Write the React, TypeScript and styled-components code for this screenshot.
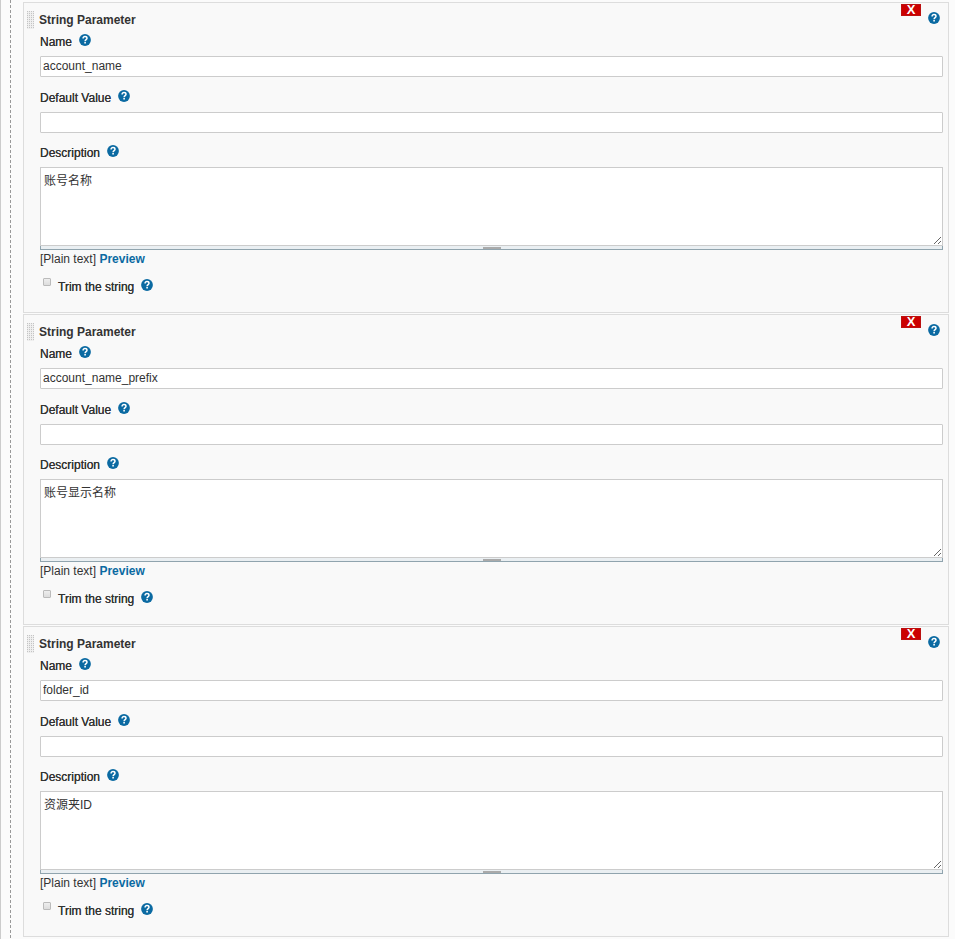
import React, { useState } from "react";
import styled, { createGlobalStyle } from "styled-components";

const GlobalStyle = createGlobalStyle`
  * { box-sizing: border-box; }
  body {
    margin: 0;
    background: #fbfbfb;
    color: #333;
    font: 12px/22px "Liberation Sans", "Noto Sans CJK SC", sans-serif;
  }
`;

const Page = styled.main`
  min-height: 100vh;
  padding-left: 9px;
  border-left: 1px solid #ccc;
`;

const ParameterList = styled.div`
  display: flex;
  flex-direction: column;
  gap: 1px;
  min-height: 100vh;
  padding: 2px 6px 2px 13px;
  background: repeating-linear-gradient(#999 0 3px, transparent 3px 5px) left top / 1px 100% no-repeat;
`;

const Card = styled.section`
  height: 311px;
  border: 1px solid #ddd;
  background: #f9f9f9;
`;

const Header = styled.header`
  display: flex;
  align-items: flex-start;
  height: 28px;
  padding: 1px 8px 0 3px;
`;

const Grip = styled.span`
  width: 7px;
  height: 18px;
  margin: 7px 5px 0 0;
  background:
    repeating-linear-gradient(90deg, transparent 0 1px, #f0f0f0 1px 2px),
    repeating-linear-gradient(#c4c4c4 0 1px, #ececec 1px 2px);
`;

const Title = styled.b`
  flex: 1;
  padding-top: 5px;
`;

const DeleteButton = styled.button`
  width: 20px;
  height: 12px;
  margin-right: 7px;
  padding: 0;
  border: 1px solid #b11;
  background: #c00;
  color: #fff;
  font: bold 13px/10px "Liberation Sans", sans-serif;
`;

const HelpButton = styled.button<{ $inHeader?: boolean }>`
  display: block;
  width: 12px;
  height: 12px;
  margin-top: ${(p) => (p.$inHeader ? 8 : 3)}px;
  padding: 0;
  border: 0;
  background: none;
`;

const Body = styled.div`
  padding: 0 5px 0 16px;
`;

const Field = styled.div<{ $gap: number }>`
  margin-bottom: ${(p) => p.$gap}px;
`;

const LabelRow = styled.div`
  display: flex;
  gap: 7px;
  height: 25px;
`;

const Label = styled.label`
  color: #333;
  text-shadow: 0 0 #333;
`;

const TextInput = styled.input`
  display: block;
  width: 100%;
  height: 21px;
  padding: 0 2px 2px;
  border: 1px solid #ccc;
  border-radius: 1px;
  background: #fff;
  color: #333;
  font: inherit;
`;

const TextArea = styled.textarea`
  display: block;
  width: 100%;
  height: 79px;
  padding: 4px 3px;
  border: 1px solid #ccc;
  background: #fff;
  color: #333;
  font: inherit;
  line-height: 18px;
  resize: both;
`;

const ResizeBar = styled.div`
  height: 4px;
  border: 1px solid #90a4ae;
  border-top: 0;
  background: linear-gradient(#aaa, #aaa) center bottom / 18px 2px no-repeat #eaeff2;
`;

const Markup = styled.div`
  line-height: 18px;
`;

const PreviewLink = styled.a`
  color: #0b6aa2;
  font-weight: bold;
  text-decoration: none;
`;

const TrimRow = styled.div`
  display: flex;
  align-items: flex-start;
  gap: 7px;
  margin-top: 8px;
  padding-left: 3px;
`;

const CheckBox = styled.input`
  appearance: none;
  width: 8px;
  height: 8px;
  margin: 2px 0 0;
  border: 1px solid #bbb;
  border-radius: 1px;
  background: linear-gradient(#eee, #ddd);
  &:checked { background: #0b6aa2; }
`;

const HelpIcon = () => (
  <svg width="12" height="12" viewBox="0 0 12 12" aria-hidden="true">
    <circle cx="6" cy="6" r="5.9" fill="#0b6aa2" />
    <path d="M4.1 4.5C4.1 3.2 4.9 2.6 6 2.6s2 .6 2 1.7C8 5.6 6.1 5.7 6.1 7.3" fill="none" stroke="#fff" strokeWidth="1.5" />
    <rect x="5.3" y="8" width="1.6" height="1.5" fill="#fff" />
  </svg>
);

const Help = ({ topic, inHeader }: { topic: string; inHeader?: boolean }) => (
  <HelpButton type="button" $inHeader={inHeader} aria-label={`Help for ${topic}`}>
    <HelpIcon />
  </HelpButton>
);

const FieldLabel = ({ id, text }: { id: string; text: string }) => (
  <LabelRow>
    <Label htmlFor={id}>{text}</Label>
    <Help topic={text} />
  </LabelRow>
);

interface Parameter {
  name: string;
  description: string;
}

const initialParameters: Parameter[] = [
  { name: "account_name", description: "账号名称" },
  { name: "account_name_prefix", description: "账号显示名称" },
  { name: "folder_id", description: "资源夹ID" },
];

const StringParameter = ({ name, description, onDelete }: Parameter & { onDelete: () => void }) => (
  <Card>
    <Header>
      <Grip />
      <Title>String Parameter</Title>
      <DeleteButton type="button" onClick={onDelete}>X</DeleteButton>
      <Help topic="String Parameter" inHeader />
    </Header>
    <Body>
      <Field $gap={10}>
        <FieldLabel id={`${name}-name`} text="Name" />
        <TextInput id={`${name}-name`} defaultValue={name} />
      </Field>
      <Field $gap={9}>
        <FieldLabel id={`${name}-value`} text="Default Value" />
        <TextInput id={`${name}-value`} />
      </Field>
      <Field $gap={0}>
        <FieldLabel id={`${name}-description`} text="Description" />
        <TextArea id={`${name}-description`} defaultValue={description} />
        <ResizeBar />
      </Field>
      <Markup>
        [Plain text] <PreviewLink href="#">Preview</PreviewLink>
      </Markup>
      <TrimRow>
        <CheckBox id={`${name}-trim`} type="checkbox" />
        <Label htmlFor={`${name}-trim`}>Trim the string</Label>
        <Help topic="Trim the string" />
      </TrimRow>
    </Body>
  </Card>
);

export default function App() {
  const [parameters, setParameters] = useState(initialParameters);
  return (
    <>
      <GlobalStyle />
      <Page>
        <ParameterList>
          {parameters.map((p) => (
            <StringParameter
              key={p.name}
              {...p}
              onDelete={() => setParameters((all) => all.filter((other) => other.name !== p.name))}
            />
          ))}
        </ParameterList>
      </Page>
    </>
  );
}
